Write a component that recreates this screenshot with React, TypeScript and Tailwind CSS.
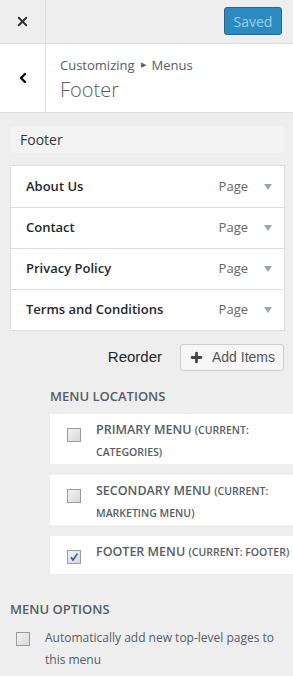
import { X, ChevronLeft, Plus } from 'lucide-react';

const ITEMS = ['About Us', 'Contact', 'Privacy Policy', 'Terms and Conditions'];

const LOCATIONS = [
  { name: 'Primary Menu', current: 'Categories', checked: false, h: 'h-[50px]' },
  { name: 'Secondary Menu', current: 'Marketing Menu', checked: false, h: 'h-[50px]' },
  { name: 'Footer Menu', current: 'Footer', checked: true, h: 'h-[38px]' },
];

function Checkbox({ checked }: { checked?: boolean }) {
  return (
    <span className="flex h-[14px] w-[14px] shrink-0 items-center justify-center border border-[#9a9a9a] bg-gradient-to-br from-[#f2f2f2] to-[#d9d9d9]">
      {checked && (
        <svg viewBox="0 0 10 10" className="h-[10px] w-[10px]">
          <path d="M2 5.2 L4 8 L8.4 1.6" fill="none" stroke="#3b55a8" strokeWidth="1.6" />
        </svg>
      )}
    </span>
  );
}

export default function App() {
  return (
    <div className="min-h-[676px] w-[293px] overflow-hidden bg-[#eeeeee] font-['Open_Sans',sans-serif] text-[#555d66]">
      {/* top bar */}
      <div className="flex h-[44px] border-b border-[#dddddd]">
        <div className="flex w-[46px] items-center justify-center border-r border-[#dddddd]">
          <X className="h-[15px] w-[15px] text-[#333]" strokeWidth={3} />
        </div>
        <div className="flex flex-1 items-start justify-end pr-[11px] pt-[7px]">
          <button className="h-[28px] w-[58px] rounded-[3px] border border-[#1f6a93] bg-[#2b8bc0] text-[14px] text-[#99d0ea]">
            Saved
          </button>
        </div>
      </div>

      {/* title */}
      <div className="flex h-[69px] border-b border-[#dddddd] bg-white">
        <div className="flex w-[46px] items-center justify-center border-r border-[#dddddd]">
          <ChevronLeft className="h-[16px] w-[16px] text-black" strokeWidth={3.5} />
        </div>
        <div className="flex flex-col pl-[14px] pt-[11px]">
          <div className="flex items-center text-[13px] leading-[20px] text-[#555d66]">
            Customizing
            <span className="mx-[6px] text-[7px]">▶</span>
            Menus
          </div>
          <div className="mt-[1px] text-[20px] font-light leading-[28px] text-[#555d66]">Footer</div>
        </div>
      </div>

      <div className="px-[10px] pt-[13px]">
        <div className="flex h-[27px] w-[275px] items-center rounded-[4px] bg-[#f3f3f3] pl-[10px] text-[14px] text-[#32373c]">
          Footer
        </div>

        <div className="mt-[12px] w-[275px] border border-[#dddddd] bg-white">
          {ITEMS.map((item, i) => (
            <div
              key={item}
              className={`flex h-[41px] items-center pl-[15px] pr-[12px] ${i > 0 ? 'border-t border-[#dddddd]' : ''}`}
            >
              <span className="flex-1 text-[13px] font-semibold text-[#23282d]">{item}</span>
              <span className="text-[13px] text-[#666]">Page</span>
              <svg viewBox="0 0 8 6" className="ml-[16px] h-[6px] w-[8px]">
                <path d="M0 0 H8 L4 6 Z" fill="#a0a5aa" />
              </svg>
            </div>
          ))}
        </div>

        <div className="-mr-[1px] mt-[13px] flex items-center justify-end gap-[18px] font-['Liberation_Sans',sans-serif]">
          <span className="text-[15px] text-[#23282d]">Reorder</span>
          <button className="flex h-[27px] w-[104px] items-center justify-center gap-[8px] rounded-[3px] border border-[#cccccc] bg-[#f7f7f7] text-[14px] text-[#555]">
            <Plus className="h-[15px] w-[15px] text-[#444]" strokeWidth={4.5} />
            Add Items
          </button>
        </div>
      </div>

      {/* locations */}
      <div className="pl-[50px] pt-[15px]">
        <div className="text-[13px] font-semibold uppercase leading-[20px] text-[#555d66]">Menu Locations</div>
        <div className="mt-[8px] flex flex-col gap-[11px]">
          {LOCATIONS.map((loc) => (
            <div key={loc.name} className={`flex ${loc.h} w-[260px] items-start bg-white pl-[17px] pt-[5px]`}>
              <div className="pt-[9px]">
                <Checkbox checked={loc.checked} />
              </div>
              <div className="pl-[15px] text-[12.5px] font-semibold uppercase leading-[21px] text-[#555d66]">
                {loc.name} <span className="text-[10.5px]">(Current: {loc.current})</span>
              </div>
            </div>
          ))}
        </div>
      </div>

      {/* options */}
      <div className="px-[10px] pt-[25px]">
        <div className="text-[13px] font-semibold uppercase leading-[20px] text-[#555d66]">Menu Options</div>
        <div className="mt-[8px] flex items-start">
          <div className="pl-[6px] pt-[5px]">
            <Checkbox />
          </div>
          <div className="pl-[15px] text-[12px] leading-[22px] text-[#555d66]">
            Automatically add new top-level pages to this menu
          </div>
        </div>
      </div>
    </div>
  );
}
